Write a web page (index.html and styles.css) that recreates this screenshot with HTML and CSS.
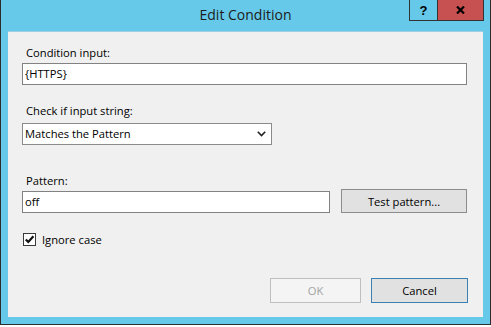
FILE: index.html
```html
<!DOCTYPE html>
<html lang="en">
<head>
    <meta charset="UTF-8">
    <title>Edit Condition</title>
    <link rel="stylesheet" href="styles.css">
</head>
<body>
<div class="window">
    <div class="titlebar">
        <span></span>
        <div class="title">Edit Condition</div>
        <div class="caption-buttons">
            <div class="cap help">?</div>
            <div class="cap close">
                <svg width="9" height="8" viewBox="0 0 9 8">
                    <path d="M1 0.5 L8 7.5 M8 0.5 L1 7.5" stroke="#000" stroke-width="2.2" fill="none"/>
                </svg>
            </div>
        </div>
    </div>

    <div class="client">
        <div class="field-label first">Condition input:</div>
        <div class="textbox condition">{HTTPS}</div>

        <div class="field-label check">Check if input string:</div>
        <div class="textbox select">
            <span>Matches the Pattern</span>
            <svg width="9" height="6" viewBox="0 0 9 6">
                <path d="M0.8 0.8 L4.5 4.5 L8.2 0.8" stroke="#222" stroke-width="1.6" fill="none"/>
            </svg>
        </div>

        <div class="field-label pattern">Pattern:</div>
        <div class="pattern-row">
            <div class="textbox pattern-input">off</div>
            <div class="btn test">Test pattern...</div>
        </div>

        <div class="checkbox-row">
            <div class="checkbox">
                <svg width="11" height="11" viewBox="0 0 11 11">
                    <path d="M1.8 5.4 L4.3 8 L9.4 2.2" stroke="#111" stroke-width="2.2" fill="none"/>
                </svg>
            </div>
            <span>Ignore case</span>
        </div>

        <div class="footer">
            <div class="btn ok">OK</div>
            <div class="btn cancel">Cancel</div>
        </div>
    </div>
</div>
</body>
</html>
```

FILE: styles.css
```css
body {
    margin: 0;
    background-color: #fff;
    font-family: "Open Sans", "Noto Sans", sans-serif;
    color: #000;
}

.window {
    width: 491px;
    box-sizing: border-box;
    background-color: #66c9ea;
    border: 1px solid #2d2d2d;
    border-top: none;
    padding: 0 7px 7px;
}

.titlebar {
    height: 31px;
    display: grid;
    grid-template-columns: 1fr auto 1fr;
}

.title {
    font-size: 14px;
    line-height: 30px;
    color: #1c1c1c;
}

.caption-buttons {
    justify-self: end;
    align-self: start;
    display: flex;
    margin-right: -1px;
    border: 1px solid #333;
    border-top: none;
}

.cap {
    height: 20px;
    display: flex;
    align-items: center;
    justify-content: center;
}

.help {
    width: 27px;
    border-right: 1px solid #333;
    font-family: "Liberation Sans", sans-serif;
    font-weight: bold;
    font-size: 13px;
}

.close {
    width: 45px;
    background-color: #c75050;
}

.client {
    height: 286px;
    box-sizing: border-box;
    background-color: #f0f0f0;
    border-top: 1px solid #9fd0e2;
    padding: 13px 15px 14px 14px;
    display: flex;
    flex-direction: column;
    font-size: 11.2px;
}

.field-label {
    line-height: 16px;
    margin-left: 4px;
}

.field-label.first {
    margin-bottom: 2px;
}

.field-label.check {
    margin-top: 18px;
    margin-bottom: 4px;
}

.field-label.pattern {
    margin-top: 28px;
}

.textbox {
    height: 22px;
    box-sizing: border-box;
    background-color: #fff;
    border: 1px solid #828282;
    padding-left: 2px;
    line-height: 20px;
}

.condition {
    width: 445px;
}

.select {
    width: 250px;
    display: flex;
    align-items: center;
    justify-content: space-between;
    padding-right: 5px;
    border-color: #8a8a8a;
}

.pattern-row {
    display: flex;
    align-items: flex-end;
    gap: 11px;
}

.pattern-input {
    width: 308px;
}

.btn {
    height: 25px;
    box-sizing: border-box;
    display: flex;
    align-items: center;
    justify-content: center;
    background-color: #e1e1e1;
    border: 1px solid #8c8c8c;
}

.test {
    width: 126px;
    height: 24px;
}

.checkbox-row {
    display: flex;
    align-items: center;
    gap: 6px;
    margin-top: 19px;
    margin-left: 1px;
}

.checkbox {
    width: 13px;
    height: 13px;
    box-sizing: border-box;
    background-color: #fff;
    border: 1px solid #3a3a3a;
    display: flex;
    align-items: center;
    justify-content: center;
}

.footer {
    margin-top: auto;
    display: flex;
    justify-content: flex-end;
    gap: 10px;
}

.ok {
    width: 91px;
    background-color: #f4f4f4;
    border-color: #bfbfbf;
    color: #a3a3a3;
}

.cancel {
    width: 97px;
    border-color: #3c7fb1;
}
```
